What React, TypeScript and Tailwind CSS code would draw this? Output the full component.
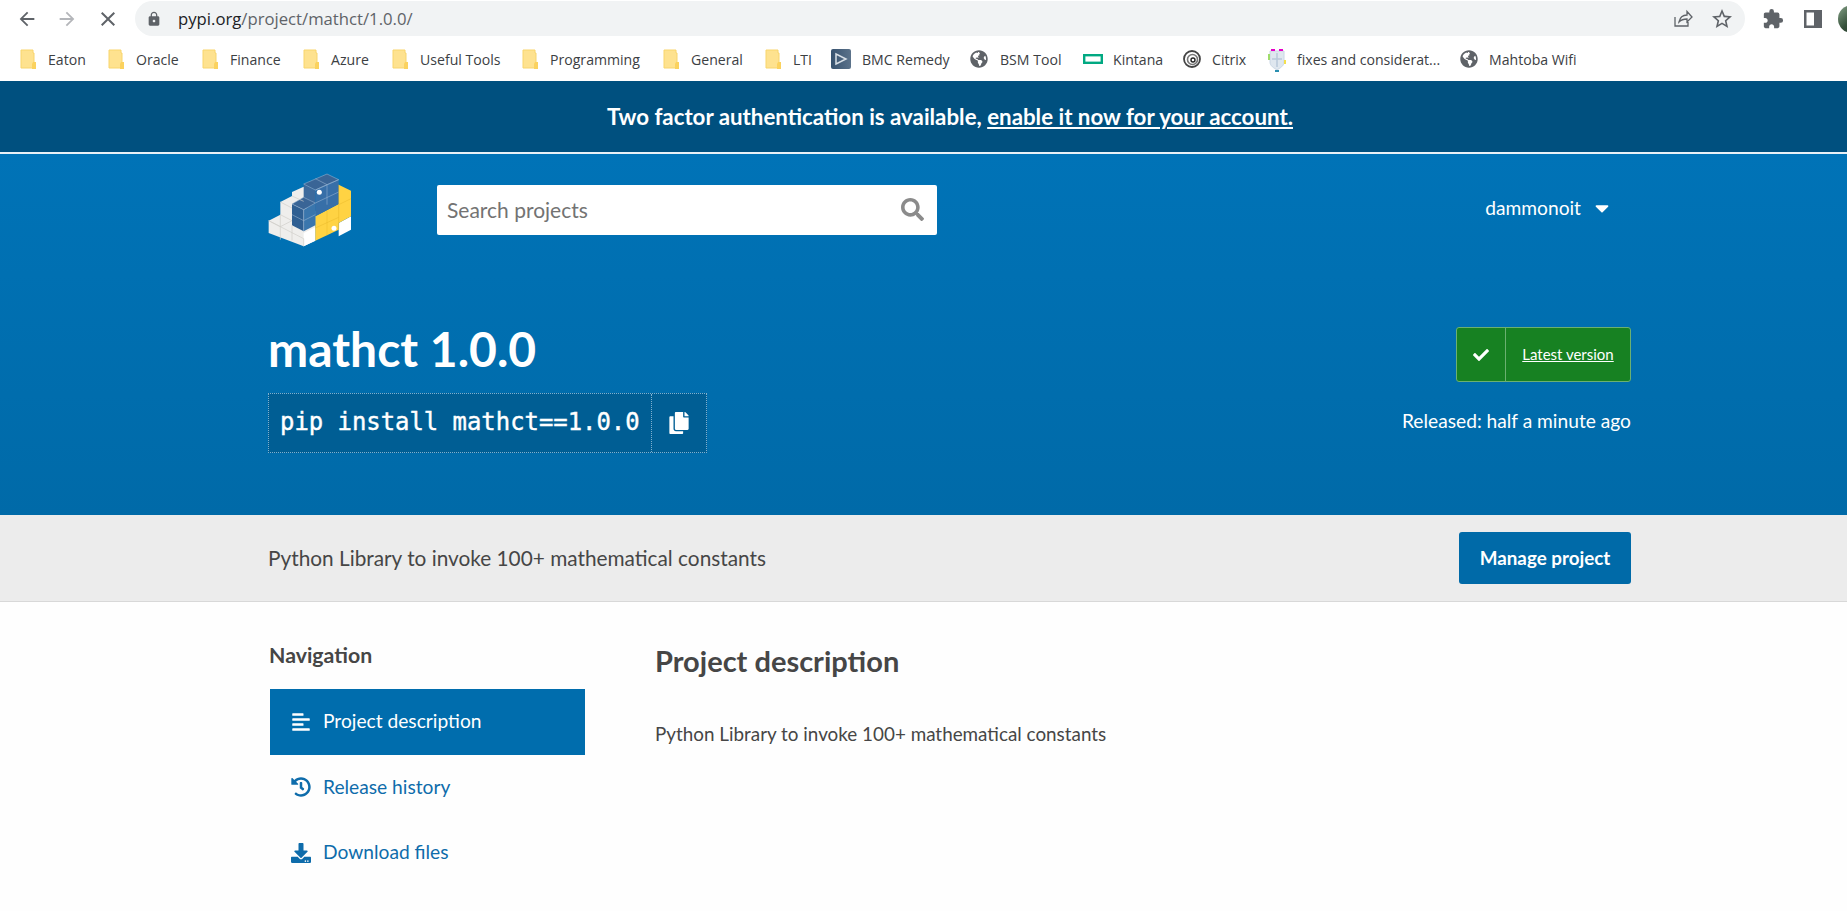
import { FaSearch, FaCheck, FaCopy, FaCaretDown, FaAlignLeft, FaHistory, FaDownload, FaGlobeAmericas } from "react-icons/fa";
import { MdArrowBack, MdArrowForward, MdClose, MdLock, MdExtension, MdStarBorder } from "react-icons/md";

function Folder() {
  return (
    <svg width="17" height="21" viewBox="0 0 17 21" className="shrink-0">
      <path d="M1 1h12v3h1v15H1z" fill="#fee28f" stroke="#f8d56c" strokeWidth="1" />
      <path d="M13 13h3v7h-4v-5z" fill="#fbd25e" />
    </svg>
  );
}

function Globe() {
  return <FaGlobeAmericas className="shrink-0 text-[18px] text-[#5f6368]" />;
}

function Bmc() {
  return (
    <svg width="20" height="20" viewBox="0 0 20 20" className="shrink-0">
      <defs>
        <linearGradient id="bmcg" x1="0" x2="1">
          <stop offset="0" stopColor="#37526f" />
          <stop offset="1" stopColor="#5c738b" />
        </linearGradient>
      </defs>
      <rect width="20" height="20" rx="2" fill="url(#bmcg)" />
      <path d="M5 5l10 5-10 5z" fill="none" stroke="#d8dfe6" strokeWidth="1.500" />
    </svg>
  );
}

function Hpe() {
  return (
    <svg width="20" height="10" viewBox="0 0 20 10" className="shrink-0">
      <rect x="1.200" y="1.200" width="17.600" height="7.600" fill="none" stroke="#01a982" strokeWidth="2.400" />
    </svg>
  );
}

function Citrix() {
  return (
    <svg width="18" height="20" viewBox="0 0 18 20" className="shrink-0">
      <circle cx="9" cy="10" r="8" fill="none" stroke="#444" strokeWidth="1.800" />
      <circle cx="9.500" cy="10.500" r="5" fill="none" stroke="#777" strokeWidth="1.600" />
      <circle cx="10" cy="11" r="2" fill="none" stroke="#222" strokeWidth="1.400" />
    </svg>
  );
}

function Shield() {
  return (
    <svg width="18" height="24" viewBox="0 0 18 24" className="shrink-0">
      <path d="M2 3h14v11c0 4-4 6-7 8-3-2-7-4-7-8z" fill="#dfe7ef" stroke="#c9d6e4" />
      <path d="M3 2h4M11 2h4" stroke="#e600c8" strokeWidth="2" />
      <path d="M1 6v6" stroke="#9fdc6a" strokeWidth="2" />
      <path d="M17 12v4" stroke="#f4e04d" strokeWidth="2" />
      <path d="M7 23h4" stroke="#2a8fb0" strokeWidth="2" />
      <path d="M9 5v14M4 11h10" stroke="#b9c9da" strokeWidth="1.500" />
    </svg>
  );
}

function Bookmark({ w, icon, label, gap }: { w: string; icon: React.ReactNode; label: string; gap: string }) {
  return (
    <div className={`flex items-center shrink-0 ${w}`}>
      <div className={`flex items-center justify-start ${gap}`}>{icon}</div>
      <span className="whitespace-nowrap">{label}</span>
    </div>
  );
}

function Logo() {
  return (
    <svg width="86" height="74" viewBox="50 35 258 222" className="shrink-0">
      <polygon points="55,178 90,160 90,122 125,104 125,92 160,76 195,150 195,238 160,255 55,215" fill="#efeeec" />
      <polygon points="160,215 195,198 195,238 160,255" fill="#ffffff" />
      <polygon points="265,185 302,165 302,205 265,225" fill="#ffffff" />
      <polygon points="195,165 265,128 265,70 302,88 302,165 265,185 265,205 195,238" fill="#ffd343" />
      <polygon points="160,68 230,38 265,55 195,86" fill="#3a6596" />
      <polygon points="160,68 195,86 195,150 160,135" fill="#3d6a9c" />
      <polygon points="195,86 265,55 265,128 195,165" fill="#376fa8" />
      <polygon points="125,128 160,108 195,125 160,145" fill="#3a6596" />
      <polygon points="125,128 160,145 160,210 125,192" fill="#2f5f92" />
      <polygon points="160,145 195,125 195,192 160,210" fill="#3a76ad" />
      <g stroke="#9db8d3" strokeOpacity="0.8" strokeWidth="2" fill="none">
        <path d="M160 68l70-30 35 17-70 31zM195 52l35 18M230 70v60M195 86l35-16 35-15M195 125l70-33" />
        <path d="M125 128l35-20 35 17-35 20zM125 160l35 18 35-18M160 145v65" />
      </g>
      <g stroke="#cfcdc8" strokeWidth="2" fill="none">
        <path d="M55 178l105 54v23M90 160v75M125 192v45M55 178l35 18 35-18M90 122l35 18M90 160l35 18M125 104l35 16" />
      </g>
      <g stroke="#e9b92b" strokeWidth="1.500" fill="none">
        <path d="M230 148v74M265 130v75M195 200l70-32M265 70v60M265 130l37-18" />
      </g>
      <circle cx="207" cy="93" r="7.500" fill="#ffffff" />
      <circle cx="251" cy="201" r="7.500" fill="#ffffff" />
    </svg>
  );
}

export default function App() {
  return (
    <div className="w-[1847px] h-[911px] overflow-hidden bg-[#fefefe] font-['Lato','Noto_Sans',sans-serif] text-[#464646]">
      {/* Chrome toolbar */}
      <div className="h-[37px] bg-white flex items-center overflow-hidden">
        <MdArrowBack className="shrink-0 ml-[16px] text-[#5f6368]" size={22} />
        <MdArrowForward className="shrink-0 ml-[18px] text-[#b4b6ba]" size={22} />
        <MdClose className="shrink-0 ml-[18px] text-[#5f6368]" size={24} />
        <div className="shrink-0 ml-[15px] w-[1610px] h-[35px] rounded-full bg-[#f1f3f4] flex items-center">
          <MdLock className="ml-[11px] text-[#5f6368]" size={16} />
          <span className="ml-[16px] text-[16.700px] font-['Open_Sans',sans-serif] text-[#5f6368]">
            <span className="text-[#202124]">pypi.org</span>/project/mathct/1.0.0/
          </span>
          <svg width="20" height="20" viewBox="0 0 20 20" className="ml-auto text-[#5f6368]" fill="none" stroke="currentColor" strokeWidth="1.300">
            <path d="M2 8v9h13v-4M6 13c1-5 4-7 8-7V2.500l5 5.500-5 5V10c-3 0-6 1-8 3z" />
          </svg>
          <MdStarBorder className="ml-[17px] mr-[11px] text-[#5f6368]" size={24} />
        </div>
        <MdExtension className="shrink-0 ml-[17px] text-[#5f6368]" size={22} />
        <svg width="18" height="18" viewBox="0 0 18 18" className="shrink-0 ml-[20px] text-[#5f6368]">
          <path d="M0 0h18v18H0zM2.500 2.500v13H10v-13z" fill="currentColor" fillRule="evenodd" />
        </svg>
        <div className="shrink-0 ml-[16px] w-[28px] h-[28px] rounded-full bg-gradient-to-br from-[#8aa68c] via-[#35503a] to-[#1f2f24]" />
      </div>

      {/* Bookmarks */}
      <div className="h-[44px] bg-white flex items-center pl-[20px] pt-[1px] text-[14.100px] font-['Open_Sans',sans-serif] text-[#3c4043] overflow-hidden">
        <Bookmark w="w-[88px]" gap="w-[28px]" icon={<Folder />} label="Eaton" />
        <Bookmark w="w-[94px]" gap="w-[28px]" icon={<Folder />} label="Oracle" />
        <Bookmark w="w-[101px]" gap="w-[28px]" icon={<Folder />} label="Finance" />
        <Bookmark w="w-[89px]" gap="w-[28px]" icon={<Folder />} label="Azure" />
        <Bookmark w="w-[130px]" gap="w-[28px]" icon={<Folder />} label="Useful Tools" />
        <Bookmark w="w-[141px]" gap="w-[28px]" icon={<Folder />} label="Programming" />
        <Bookmark w="w-[102px]" gap="w-[28px]" icon={<Folder />} label="General" />
        <Bookmark w="w-[66px]" gap="w-[28px]" icon={<Folder />} label="LTI" />
        <Bookmark w="w-[139px]" gap="w-[31px]" icon={<Bmc />} label="BMC Remedy" />
        <Bookmark w="w-[113px]" gap="w-[30px]" icon={<Globe />} label="BSM Tool" />
        <Bookmark w="w-[100px]" gap="w-[30px]" icon={<Hpe />} label="Kintana" />
        <Bookmark w="w-[85px]" gap="w-[29px]" icon={<Citrix />} label="Citrix" />
        <Bookmark w="w-[192px]" gap="w-[29px]" icon={<Shield />} label="fixes and considerat..." />
        <Bookmark w="w-[130px]" gap="w-[29px]" icon={<Globe />} label="Mahtoba Wifi" />
      </div>

      {/* Banner */}
      <div className="h-[71px] bg-[#00507f] flex items-center justify-center pl-[53px] text-white text-[22.300px] font-bold">
        <span>
          Two factor authentication is available, <span className="underline">enable it now for your account.</span>
        </span>
      </div>
      <div className="h-[2px] bg-[#e8f1f7]" />

      {/* Hero */}
      <div className="h-[361px] bg-gradient-to-b from-[#0073b7] to-[#006aa8] text-white pl-[267px]">
        <div className="w-[1364px]">
          <div className="flex items-center pt-[19px]">
            <Logo />
            <div className="ml-[84px] w-[500px] h-[50px] bg-white rounded-[2px] flex items-center justify-between pl-[10px] pr-[13px] mb-[1px]">
              <span className="text-[21px] text-[#737373]">Search projects</span>
              <FaSearch className="text-[23px] text-[#8b8b8b]" />
            </div>
            <div className="ml-auto mr-[18px] flex items-center gap-[10px] text-[19.200px] mb-[3px]">
              dammonoit
              <FaCaretDown className="text-[22px]" />
            </div>
          </div>
          <div className="flex justify-between items-start pt-[72px]">
            <div>
              <h1 className="text-[48px] leading-[60px] font-bold pl-[1px]">mathct 1.0.0</h1>
              <div className="ml-[1px] mt-[14px] flex h-[60px] w-[439px] bg-[#005e94] border border-dotted border-[#7fb0cf]">
                <div className="w-[383px] flex items-center pl-[11px] font-['DejaVu_Sans_Mono',monospace] text-[23.900px] [-webkit-text-stroke:0.4px_white] whitespace-nowrap border-r border-dotted border-[#7fb0cf]">
                  pip install mathct==1.0.0
                </div>
                <div className="flex-1 flex items-center justify-center">
                  <FaCopy className="text-[22px]" />
                </div>
              </div>
            </div>
            <div className="flex flex-col items-end pt-[8px]">
              <div className="flex w-[175px] h-[55px] bg-[#178122] border border-[#6bb071] rounded-[3px]">
                <div className="w-[49px] flex items-center justify-center border-r border-[#6bb071]">
                  <FaCheck className="text-[16px]" />
                </div>
                <div className="flex-1 flex items-center justify-center text-[15px] underline">Latest version</div>
              </div>
              <div className="mt-[25px] text-[19.200px]">Released: half a minute ago</div>
            </div>
          </div>
        </div>
      </div>

      {/* Description bar */}
      <div className="h-[87px] bg-[#ececec] border-b border-[#d8d8d8] pl-[268px] flex items-center">
        <div className="w-[1363px] flex items-center justify-between">
          <span className="text-[20.800px] text-[#464646]">Python Library to invoke 100+ mathematical constants</span>
          <div className="w-[172px] h-[52px] bg-[#006aa8] text-white rounded-[3px] flex items-center justify-center text-[18.800px] font-bold">
            Manage project
          </div>
        </div>
      </div>

      {/* Main */}
      <div className="flex pl-[270px]">
        <div className="w-[315px]">
          <div className="pt-[41px] -ml-[1px] text-[21.300px] leading-[24px] font-bold text-[#464646]">Navigation</div>
          <div className="mt-[22px]">
            <div className="h-[65.500px] bg-[#006dad] text-white flex items-center pl-[21px] text-[19.200px]">
              <FaAlignLeft className="text-[20px] mr-[12px]" />
              Project description
            </div>
            <div className="h-[65.500px] text-[#0e6cab] flex items-center pl-[21px] text-[19.200px]">
              <FaHistory className="text-[20px] mr-[12px]" />
              Release history
            </div>
            <div className="h-[65.500px] text-[#0e6cab] flex items-center pl-[21px] text-[19.200px]">
              <FaDownload className="text-[20px] mr-[12px]" />
              Download files
            </div>
          </div>
        </div>
        <div className="ml-[70px]">
          <h2 className="pt-[41px] text-[29px] leading-[36px] font-bold text-[#464646]">Project description</h2>
          <p className="mt-[41px] text-[18.850px] leading-[28px] text-[#464646]">Python Library to invoke 100+ mathematical constants</p>
        </div>
      </div>
    </div>
  );
}
